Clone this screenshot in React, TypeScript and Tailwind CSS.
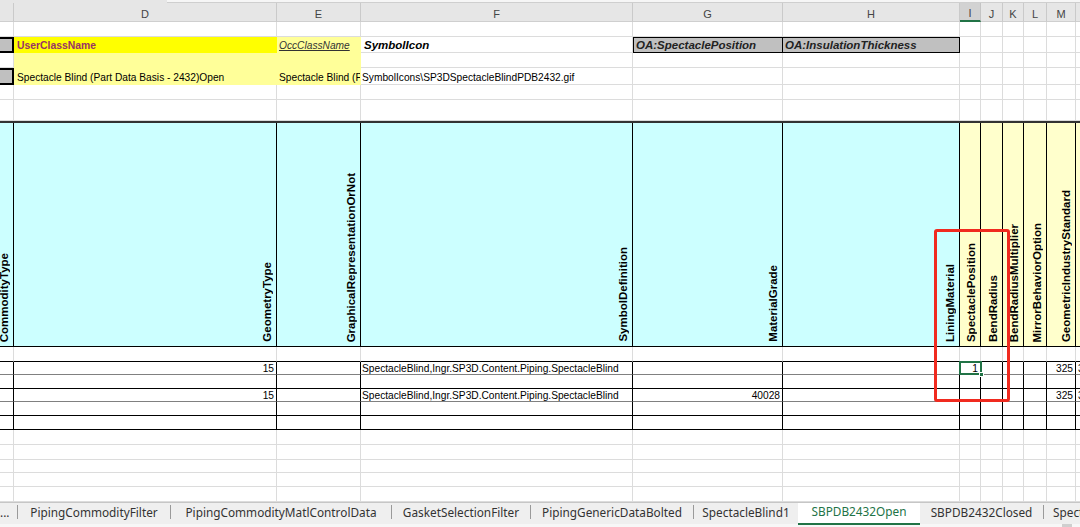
import React from 'react'

// column widths C..N (C and N are cut by the window)
const W = ['w-[14px]', 'w-[263px]', 'w-[84px]', 'w-[272px]', 'w-[150px]', 'w-[177px]', 'w-[21px]', 'w-[22px]', 'w-[21px]', 'w-[23px]', 'w-[29px]', 'w-[30px]']

const GRID = 'border-[#dcdcdc]'
const DATA = 'border-r-black border-b-black'
const DATA2 = 'border-r-black border-b-[#808080]'
const LTYEL = 'bg-[#ffff99] border-[#ffff99]'

type Spec = { c?: string; t?: React.ReactNode }

const Row: React.FC<{ h: string; line: string; cells?: Record<number, Spec> }> = ({ h, line, cells = {} }) => (
  <div className={`flex ${h}`}>
    {W.map((w, i) => (
      <div key={i} className={`${w} shrink-0 h-full border-r border-b flex items-end overflow-hidden whitespace-nowrap ${cells[i]?.c ?? line}`}>
        {cells[i]?.t}
      </div>
    ))}
  </div>
)

const Num: React.FC<{ v: string }> = ({ v }) => <span className="ml-auto pr-[2px] leading-[11px]">{v}</span>

const heads = [
  'CommodityType', 'GeometryType', 'GraphicalRepresentationOrNot', 'SymbolDefinition', 'MaterialGrade', 'LiningMaterial',
  'SpectaclePosition', 'BendRadius', 'BendRadiusMultiplier', 'MirrorBehaviorOption', 'GeometricIndustryStandard', '',
]

const letters = ['', 'D', 'E', 'F', 'G', 'H', 'I', 'J', 'K', 'L', 'M', 'N']

const tabs = [
  { name: 'PipingCommodityFilter', w: 'w-[152px]' },
  { name: 'PipingCommodityMatlControlData', w: 'w-[220px]' },
  { name: 'GasketSelectionFilter', w: 'w-[138px]' },
  { name: 'PipingGenericDataBolted', w: 'w-[162px]' },
]

const sep = <div className="w-px h-[14px] bg-[#9a9a9a] shrink-0" />

export default function App() {
  const specOpen = 'Spectacle Blind (Part Data Basis - 2432)Open'
  const symDef = 'SpectacleBlind,Ingr.SP3D.Content.Piping.SpectacleBlind'

  return (
    <div className="relative w-[1080px] h-[527px] overflow-hidden bg-white font-['Liberation_Sans',Arial,sans-serif] text-[10.2px] leading-[12px] text-black">
      {/* formula bar edge */}
      <div className="flex h-[3px]">
        <div className="w-[167px] bg-[#e6e6e6]" />
        <div className="flex-1 bg-[#f6f6f6] border-b border-[#cfcfcf]" />
      </div>

      {/* column letters */}
      <div className="flex h-[19px] bg-[#e6e6e6]">
        {W.map((w, i) => (
          <div
            key={i}
            className={`${w} shrink-0 h-full border-r flex justify-center items-end pb-[1px] text-[11px] leading-[12px] text-[#444] ${
              i === 6 ? 'bg-[#d2d2d2] border-r-[#c4c4c4] border-b-2 border-b-[#217346]' : 'border-r-[#cacaca] border-b border-b-[#cfcfcf]'
            }`}
          >
            {letters[i]}
          </div>
        ))}
      </div>

      <Row h="h-[15px]" line={GRID} />
      <Row
        h="h-[16px]"
        line={GRID}
        cells={{
          0: { c: 'bg-[#c0c0c0] border-t-2 border-b-2 border-r-2 border-black' },
          1: { c: 'bg-[#ffff00] border-[#ffff00]', t: <span className="pl-[3px] font-bold text-[10.4px] text-[#993366]">UserClassName</span> },
          2: { c: LTYEL, t: <span className="pl-[2px] italic underline text-[#333]">OccClassName</span> },
          3: { c: GRID, t: <span className="pl-[3px] font-bold italic text-[11.5px] leading-[13px]">SymbolIcon</span> },
          4: { c: 'bg-[#c0c0c0] border-y border-x border-black', t: <span className="pl-[2px] font-bold italic text-[11.5px] leading-[13px] text-[#222]">OA:SpectaclePosition</span> },
          5: { c: 'bg-[#c0c0c0] border-y border-r border-black', t: <span className="pl-[2px] font-bold italic text-[11.5px] leading-[13px] text-[#222]">OA:InsulationThickness</span> },
        }}
      />
      <Row h="h-[15px]" line={GRID} cells={{ 1: { c: LTYEL }, 2: { c: LTYEL } }} />
      <Row
        h="h-[17px]"
        line={GRID}
        cells={{
          0: { c: 'bg-[#c0c0c0] border-t-2 border-b-2 border-r-2 border-black' },
          1: { c: LTYEL, t: <span className="pl-[3px]">{specOpen}</span> },
          2: { c: LTYEL, t: <span className="pl-[2px]">{specOpen}</span> },
          3: { c: GRID, t: <span className="pl-[1px]">{'SymbolIcons\\SP3DSpectacleBlindPDB2432.gif'}</span> },
        }}
      />
      <Row h="h-[15px]" line={GRID} />
      <Row h="h-[21px]" line={GRID} />

      {/* rotated header row */}
      <div className="flex h-[226px] border-t-2 border-t-[#333] border-b border-b-black">
        {W.map((w, i) => (
          <div
            key={i}
            className={`${w} shrink-0 h-full border-r border-black flex items-end justify-end pr-[3px] pb-[4px] overflow-hidden ${
              i < 6 ? 'bg-[#ccffff]' : 'bg-[#ffffcc]'
            }`}
          >
            <span className="[writing-mode:vertical-rl] rotate-180 font-bold text-[11.5px] leading-[12px] whitespace-nowrap">{heads[i]}</span>
          </div>
        ))}
      </div>

      <Row h="h-[15px]" line="border-r-[#dcdcdc] border-b-black" />
      <Row h="h-[13px]" line={DATA2} cells={{ 1: { c: DATA2, t: <Num v="15" /> }, 3: { c: DATA2, t: <span className="pl-[1px] leading-[11px]">{symDef}</span> }, 6: { c: DATA2, t: <Num v="1" /> }, 10: { c: DATA2, t: <Num v="325" /> }, 11: { c: DATA2, t: <span className="pl-[2px] leading-[11px]">325</span> } }} />
      <Row h="h-[14px]" line={DATA} />
      <Row h="h-[13px]" line={DATA2} cells={{ 1: { c: DATA2, t: <Num v="15" /> }, 3: { c: DATA2, t: <span className="pl-[1px] leading-[11px]">{symDef}</span> }, 4: { c: DATA2, t: <Num v="40028" /> }, 10: { c: DATA2, t: <Num v="325" /> }, 11: { c: DATA2, t: <span className="pl-[2px] leading-[11px]">325</span> } }} />
      <Row h="h-[14px]" line={DATA} />
      <Row h="h-[14px]" line={DATA} />

      <Row h="h-[15px]" line={GRID} />
      <Row h="h-[15px]" line={GRID} />
      <Row h="h-[13px]" line={GRID} />
      <Row h="h-[14px]" line={GRID} />
      <Row h="h-[15px]" line={GRID} />

      {/* sheet tabs */}
      <div className="flex items-center pb-[3px] h-[22px] bg-[#efefef] border-t border-[#c6c6c6] font-['Noto_Sans',sans-serif] text-[11.8px] leading-[14px] text-[#333] whitespace-nowrap">
        <div className="w-[17px] shrink-0">...</div>
        {sep}
        {tabs.map((t) => (
          <React.Fragment key={t.name}>
            <div className={`${t.w} shrink-0 text-center`}>{t.name}</div>
            {sep}
          </React.Fragment>
        ))}
        <div className="w-[104px] shrink-0 text-center">SpectacleBlind1</div>
        <div className="w-[122px] shrink-0 h-[22px] -mb-[3px] pb-[3px] bg-white border-b-2 border-[#217346] text-[#217346] flex items-center justify-center">SBPDB2432Open</div>
        <div className="w-[123px] shrink-0 text-center">SBPDB2432Closed</div>
        {sep}
        <div className="pl-[9px]">SpectacleBlind2</div>
      </div>
      <div className="flex h-[3px] bg-[#f7f7f7]">
        <div className="ml-auto mr-[8px] w-[10px] bg-[#cfcfcf]" />
      </div>

      {/* active cell */}
      <div className="absolute left-[959px] top-[361px] w-[23px] h-[14px] border-2 border-[#217346]" />
      <div className="absolute left-[979px] top-[372px] w-[5px] h-[5px] bg-[#217346] border border-white" />

      {/* red highlight */}
      <div className="absolute left-[934px] top-[229px] w-[76px] h-[173px] border-[3px] border-[#f02a1f] rounded-[3px]" />
    </div>
  )
}
